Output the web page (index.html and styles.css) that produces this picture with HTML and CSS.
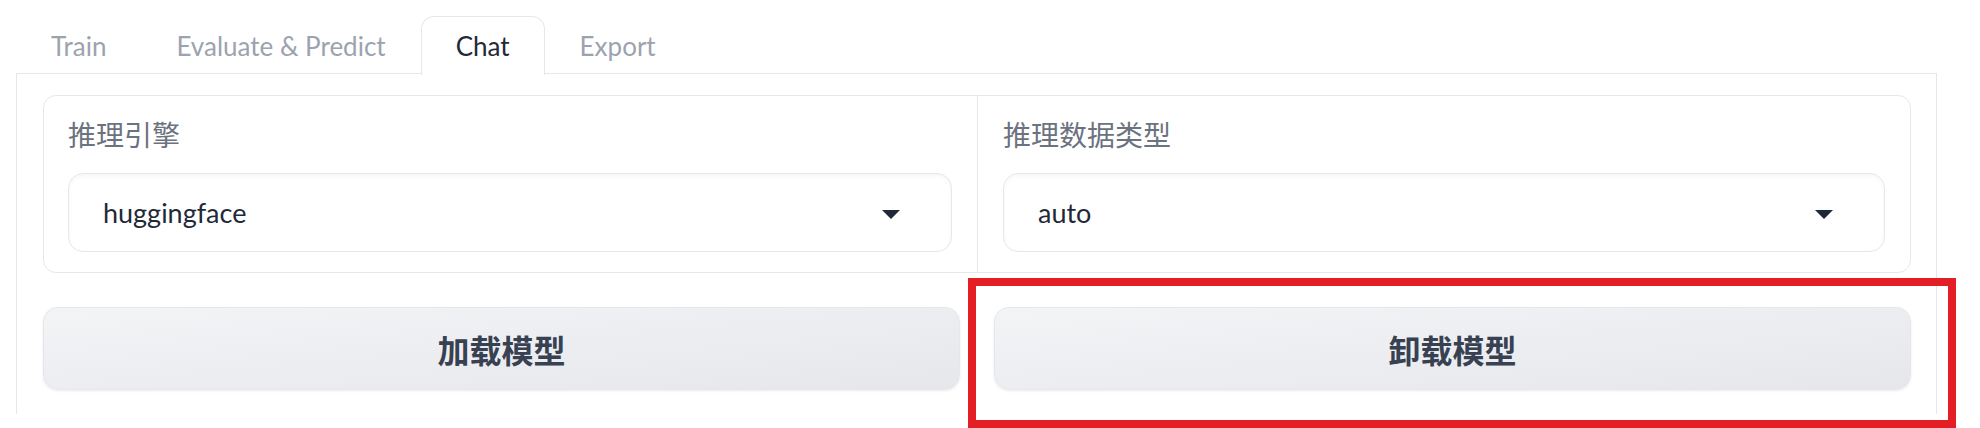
FILE: index.html
```html
<!DOCTYPE html>
<html lang="zh">
<head>
<meta charset="utf-8">
<title>Chat</title>
<link rel="stylesheet" href="styles.css">
</head>
<body>
<div class="page">
  <div class="tab-nav">
    <button class="tab">Train</button>
    <button class="tab">Evaluate &amp; Predict</button>
    <button class="tab selected">Chat</button>
    <button class="tab">Export</button>
  </div>
  <div class="panel">
    <div class="form">
      <div class="field">
        <span class="label">推理引擎</span>
        <div class="dropdown">
          <span class="value">huggingface</span>
          <span class="arrow"></span>
        </div>
      </div>
      <div class="field field-right">
        <span class="label">推理数据类型</span>
        <div class="dropdown">
          <span class="value">auto</span>
          <span class="arrow"></span>
        </div>
      </div>
    </div>
    <div class="actions">
      <button class="btn">加载模型</button>
      <button class="btn">卸载模型</button>
    </div>
  </div>
  <div class="highlight"></div>
</div>
</body>
</html>
```

FILE: styles.css
```css
* {
  box-sizing: border-box;
}

html, body {
  margin: 0;
  padding: 0;
  background: #ffffff;
}

body {
  font-family: "Lato", "Noto Sans CJK SC", sans-serif;
  color: #1f2937;
  width: 1980px;
  height: 428px;
  overflow: hidden;
}

.page {
  position: relative;
  padding: 16px 0 0 16px;
  width: 1937px;
}

.tab-nav {
  display: flex;
  height: 58px;
  border-bottom: 1px solid #e5e7eb;
}

.tab {
  font-family: inherit;
  font-size: 26px;
  color: #9ca3af;
  background: transparent;
  border: 1px solid transparent;
  border-bottom: none;
  padding: 0 34px;
  margin: 0;
  height: 58px;
  line-height: 56px;
  cursor: pointer;
}

.tab.selected {
  color: #1f2937;
  background: #ffffff;
  border-color: #e5e7eb;
  border-top-left-radius: 13px;
  border-top-right-radius: 13px;
  height: 59px;
  margin-bottom: -1px;
}

.panel {
  border: 1px solid #e5e7eb;
  border-top: none;
  border-bottom: none;
  padding: 21px 25px 24px 26px;
}

.form {
  display: grid;
  grid-template-columns: 1fr 1fr;
  border: 1px solid #e5e7eb;
  border-radius: 13px;
  background: #ffffff;
}

.field {
  display: flex;
  flex-direction: column;
  padding: 19px 25px 20px 24px;
}

.field-right {
  border-left: 1px solid #e5e7eb;
  padding-left: 25px;
}

.label {
  font-size: 28px;
  line-height: 40px;
  color: #6b7280;
  margin-bottom: 18px;
}

.dropdown {
  display: flex;
  align-items: center;
  justify-content: space-between;
  height: 79px;
  padding: 0 51px 0 34px;
  border: 1px solid #e5e7eb;
  border-radius: 15px;
  background: #ffffff;
  box-shadow: inset 0 2px 4px rgba(0, 0, 0, 0.04);
}

.value {
  font-size: 27px;
  color: #1f2937;
}

.arrow {
  width: 0;
  height: 0;
  border-left: 9px solid transparent;
  border-right: 9px solid transparent;
  border-top: 9px solid #1f2937;
  margin-top: 4px;
}

.actions {
  display: grid;
  grid-template-columns: 1fr 1fr;
  column-gap: 34px;
  margin-top: 34px;
}

.btn {
  font-family: inherit;
  height: 83px;
  font-size: 32px;
  font-weight: 700;
  color: #374151;
  background: linear-gradient(to bottom right, #f3f4f6, #e5e7eb);
  border: 1px solid #e5e7eb;
  border-radius: 15px;
  box-shadow: 0 1px 3px rgba(0, 0, 0, 0.08);
  cursor: pointer;
}

.highlight {
  position: absolute;
  left: 968px;
  top: 278px;
  width: 988px;
  height: 150px;
  border: 8px solid #e31e24;
  pointer-events: none;
}
```
